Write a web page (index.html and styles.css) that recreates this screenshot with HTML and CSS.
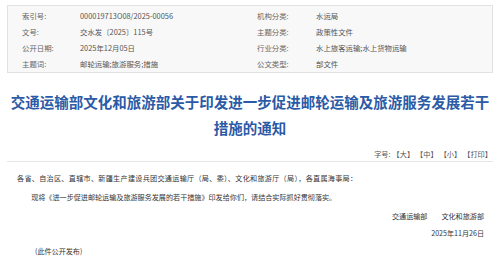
FILE: index.html
```html
<!DOCTYPE html>
<html lang="zh-CN">
<head>
  <meta charset="UTF-8" />
  <title>交通运输部文化和旅游部关于印发进一步促进邮轮运输及旅游服务发展若干措施的通知</title>
  <link rel="stylesheet" href="styles.css">
</head>
<body>
  <div class="page">
    <div class="info">
      <div class="info-label">索引号:</div>
      <div class="info-value">000019713O08/2025-00056</div>
      <div class="info-label">机构分类:</div>
      <div class="info-value">水运局</div>

      <div class="info-label">文号:</div>
      <div class="info-value">交水发〔2025〕115号</div>
      <div class="info-label">主题分类:</div>
      <div class="info-value">政策性文件</div>

      <div class="info-label">公开日期:</div>
      <div class="info-value">2025年12月05日</div>
      <div class="info-label">行业分类:</div>
      <div class="info-value">水上旅客运输;水上货物运输</div>

      <div class="info-label">主题词:</div>
      <div class="info-value">邮轮运输;旅游服务;措施</div>
      <div class="info-label">公文类型:</div>
      <div class="info-value">部文件</div>
    </div>

    <h1 class="title">交通运输部文化和旅游部关于印发进一步促进邮轮运输及旅游服务发展若干措施的通知</h1>

    <div class="tools">
      <span>字号:</span>
      <a href="javascript:void(0);">【大】</a>
      <a href="javascript:void(0);">【中】</a>
      <a href="javascript:void(0);">【小】</a>
      <a href="javascript:void(0);">【打印】</a>
    </div>

    <div class="content">
      <p class="lead">各省、自治区、直辖市、新疆生产建设兵团交通运输厅（局、委）、文化和旅游厅（局），各直属海事局：</p>
      <p class="indent">现将《进一步促进邮轮运输及旅游服务发展的若干措施》印发给你们，请结合实际抓好贯彻落实。</p>
      <p class="sign"><span>交通运输部</span><span>文化和旅游部</span></p>
      <p class="date">2025年11月26日</p>
      <p class="note">(此件公开发布)</p>
    </div>
  </div>
</body>
</html>
```

FILE: styles.css
```css
html, body {
  margin: 0;
  padding: 0;
  background-color: #fff;
  font-family: "Noto Sans CJK SC", "Noto Sans", sans-serif;
  color: #333;
}
.page {
  padding: 5px 7px 0 7px;
}
.info {
  display: grid;
  grid-template-columns: 58px 177px 59px 1fr;
  grid-auto-rows: 16px;
  align-items: center;
  padding: 1px 0 1px 14px;
  background-color: #f8f8f8;
  border: 1px solid #e2e2e2;
  font-size: 7.4px;
}
.info-label {
  color: #666;
}
.info-value {
  color: #555;
}
.title {
  margin: 16px 0 0;
  font-size: 14.5px;
  line-height: 26px;
  font-weight: bold;
  color: #2b5aa6;
  text-align: center;
}
.tools {
  margin-top: 7px;
  padding-right: 1px;
  display: flex;
  justify-content: flex-end;
  gap: 2px;
  font-size: 7.2px;
  line-height: 13px;
  color: #555;
  border-bottom: 1px solid #e6e6e6;
}
.tools a {
  color: #555;
  text-decoration: none;
}
.content {
  padding: 7px 9px 0 10px;
  font-size: 7.1px;
  line-height: 18px;
  color: #333;
}
.content p {
  margin: 0;
}
.lead {
  letter-spacing: 0.3px;
}
.indent {
  text-indent: 2em;
  line-height: 20px;
}
.sign {
  display: flex;
  justify-content: flex-end;
  gap: 14px;
}
.date {
  text-align: right;
  line-height: 17px;
}
.note {
  padding-left: 18px;
}
```
